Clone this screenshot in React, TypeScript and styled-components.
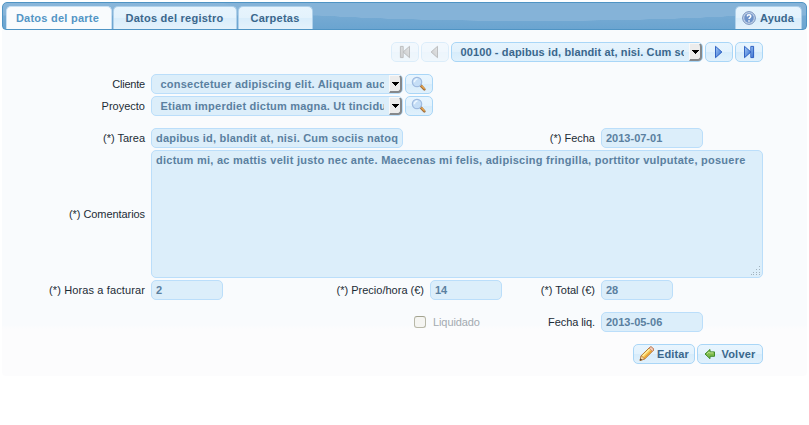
import React from "react";
import styled, { createGlobalStyle } from "styled-components";

const Global = createGlobalStyle`
  * { box-sizing: border-box; }
  body { margin: 0; background: #fff; }
  #root { font: 11px/18px "Liberation Sans", Arial, sans-serif; color: #222; }
`;

const Page = styled.div`
  width: 809px;
  padding: 2px 2px 0;
`;

const Bar = styled.header`
  display: flex;
  height: 28px;
  padding: 3px 4px 0 3px;
  border: 1px solid #4f94c4;
  border-radius: 5px 5px 4px 4px;
  overflow: hidden;
  background:
    radial-gradient(ellipse 310px 20px at 528px -2px, #85b3d8 0, #85b3d8 99%, transparent 100%),
    linear-gradient(#89b6da 0, #85b3d8 12px, #75aad3 13px, #6ba4d0 100%);
`;

const Tab = styled.div<{ $w: number; $gap?: number; $active?: boolean; $ls?: number; $end?: boolean }>`
  display: flex;
  align-items: center;
  justify-content: center;
  gap: 4px;
  flex: none;
  width: ${(p) => p.$w}px;
  height: ${(p) => (p.$active ? 25 : 23)}px;
  padding: ${(p) => (p.$active ? "0 3px 2px 0" : "0 1px 0 0")};
  margin-left: ${(p) => (p.$end ? "auto" : `${p.$gap ?? 0}px`)};
  border: 1px solid ${(p) => (p.$active ? "#c8e0f3" : "#aed0ea")};
  border-bottom: 0;
  border-radius: 5px 5px 0 0;
  background: ${(p) => (p.$active ? "#f9fbfd" : "linear-gradient(#e7f4fd 0, #e3f2fc 50%, #d9edfb 52%, #e4f2fb 100%)")};
  color: ${(p) => (p.$active ? "#5395c5" : "#3a678c")};
  font-weight: bold;
  letter-spacing: ${(p) => p.$ls ?? 0.25}px;
  white-space: nowrap;
`;

const Panel = styled.main`
  display: flex;
  flex-direction: column;
  height: 346px;
  padding: 12px 44px 0 0;
  border-radius: 0 0 4px 4px;
  background: linear-gradient(#f9fbfd 0 295px, #fcfcfd 299px 100%);
`;

const Row = styled.div<{ $mt?: number; $end?: boolean; $h?: number }>`
  display: flex;
  align-items: center;
  justify-content: ${(p) => (p.$end ? "flex-end" : "flex-start")};
  gap: 2px;
  height: ${(p) => p.$h ?? 20}px;
  margin-top: ${(p) => p.$mt ?? 0}px;
`;

const Label = styled.label<{ $w: number; $ls?: number }>`
  flex: none;
  width: ${(p) => p.$w}px;
  padding-right: 4px;
  text-align: right;
  white-space: nowrap;
  letter-spacing: ${(p) => p.$ls ?? 0}px;
  color: #1c2b36;
`;

const Field = styled.div<{ $w: number; $ls?: number }>`
  flex: none;
  width: ${(p) => p.$w}px;
  height: 20px;
  padding: 0 4px;
  border: 1px solid #bbdefa;
  border-radius: 5px;
  background: #dceefa;
  color: #5a80a0;
  font-weight: bold;
  white-space: nowrap;
  letter-spacing: ${(p) => p.$ls ?? 0}px;
`;

const Area = styled(Field)`
  position: relative;
  height: 128px;
`;

const Grip = styled.svg`
  position: absolute;
  right: 1px;
  bottom: 1px;
`;

const SelectBox = styled.div<{ $lit?: boolean }>`
  display: flex;
  flex: none;
  width: 252px;
  height: 20px;
  padding-left: 8px;
  border: 1px solid ${(p) => (p.$lit ? "#a9d6f7" : "#bbdefa")};
  border-radius: 5px;
  background: ${(p) => (p.$lit ? "linear-gradient(#e7f4fd 0, #e1f1fc 50%, #d7ecfb 52%, #e0f1fc 100%)" : "#dceefa")};
  color: ${(p) => (p.$lit ? "#3a678c" : "#5a80a0")};
  font-weight: bold;
`;

const SelectText = styled.span<{ $ls: number }>`
  width: 224px;
  padding-left: 0.5px;
  overflow: hidden;
  white-space: nowrap;
  letter-spacing: ${(p) => p.$ls}px;
`;

const Arrow = styled.span`
  display: flex;
  align-items: center;
  justify-content: center;
  width: 13px;
  height: 18px;
  margin-left: 5px;
  border: solid;
  border-width: 1px 2px 2px 1px;
  border-color: #f8f8f8 #85888b #85888b #f8f8f8;
  border-radius: 0 4px 4px 0;
  background: #ececec;
`;

const Button = styled.button<{ $w?: number; $off?: boolean; $ls?: number; $gap?: number }>`
  display: flex;
  align-items: center;
  justify-content: center;
  gap: ${(p) => p.$gap ?? 0}px;
  flex: none;
  width: ${(p) => p.$w ?? 28}px;
  height: 20px;
  padding: 0;
  border: 1px solid #a9d6f7;
  border-radius: 5px;
  background: linear-gradient(#e8f5fe 0, #e3f2fd 50%, #d7ecfb 52%, #e1f1fc 100%);
  opacity: ${(p) => (p.$off ? 0.35 : 1)};
  color: #3a678c;
  font: bold 11px/18px "Liberation Sans", Arial, sans-serif;
  letter-spacing: ${(p) => p.$ls ?? 0.2}px;
`;

const Check = styled.span`
  flex: none;
  width: 12px;
  height: 12px;
  margin-left: 412px;
  border: 1px solid #b8b8a8;
  border-top-color: #a3a38f;
  border-radius: 3px;
  background: #f5f5f2;
`;

const Muted = styled.span`
  width: 60px;
  padding-left: 5px;
  color: #a4aab0;
  letter-spacing: -0.1px;
`;

function Caret() {
  return (
    <svg width="8" height="4" viewBox="0 0 8 4" shapeRendering="crispEdges">
      <path d="M0 0h8L4 4z" fill="#000" />
    </svg>
  );
}

function Nav({ kind, off }: { kind: "first" | "prev" | "next" | "last"; off?: boolean }) {
  const flip = kind === "first" || kind === "prev";
  const bar = kind === "first" || kind === "last";
  const c = off ? ["#bbb", "#777", "#444"] : ["#a8cdf8", "#2b66cc", "#2558bd"];
  const x = bar ? 3.5 : flip ? 5.5 : 4.5;
  return (
    <svg width="16" height="16" viewBox="0 0 16 16">
      <defs>
        <linearGradient id={`nav-${kind}`} x2="1" y2="1">
          <stop stopColor={c[0]} />
          <stop offset="1" stopColor={c[1]} />
        </linearGradient>
      </defs>
      <g transform={flip ? "translate(16 0) scale(-1 1)" : undefined} fill={`url(#nav-${kind})`} stroke={c[2]} strokeWidth=".9">
        <path d={`M${x} 2.3V13.7L${x + 6.4} 8z`} />
        {bar && <path d="M9.8 2.4h2.8v11.2H9.8z" />}
      </g>
    </svg>
  );
}

function Magnifier() {
  return (
    <svg width="16" height="16" viewBox="0 0 16 16">
      <path d="M9.8 9.5l3.6 3.8" stroke="#a2713f" strokeWidth="2.6" strokeLinecap="round" />
      <path d="M10.8 10l2.5 2.7" stroke="#eea94d" strokeWidth="1.2" strokeLinecap="round" />
      <circle cx="6" cy="6" r="4.7" fill="#c5def6" stroke="#9fbbe0" strokeWidth="1.2" />
      <path d="M3.4 6.2A3 3 0 0 1 6.5 3" fill="none" stroke="#edf7ff" strokeWidth="1.5" />
    </svg>
  );
}

function Help() {
  return (
    <svg width="14" height="14" viewBox="0 0 14 14">
      <circle cx="7" cy="7" r="6.3" fill="#dfe8f5" stroke="#6684b4" />
      <circle cx="7" cy="7" r="4.8" fill="#6d92c9" stroke="#8aa7d2" strokeWidth=".6" />
      <path d="M5.2 5.4C5.3 3.2 8.9 3.3 8.8 5.3 8.8 6.6 7 6.6 7 8.1M7 9.3v1.5" fill="none" stroke="#fff" strokeWidth="1.4" />
    </svg>
  );
}

function Pencil() {
  return (
    <svg width="16" height="16" viewBox="0 0 16 16">
      <path d="M1 14.5l1.2-4.8L11 1.1c1.1-.9 4.2 1.6 3.5 3.1L5.7 13z" fill="#f7c653" stroke="#aa6823" strokeWidth=".9" />
      <path d="M3.5 10l7.8-7.5" stroke="#fff0a1" strokeWidth="1.4" />
      <path d="M5.2 12l7.7-7.5" stroke="#e59328" strokeWidth="1" />
      <path d="M10 2.1l1.3-1c1.2-.7 3.8 1.6 3.2 3l-1.2 1.3z" fill="#f3cdb8" stroke="#b7735b" strokeWidth=".7" />
      <path d="M2.2 9.8l3.4 3.1L1 14.5z" fill="#f5d7a5" stroke="#a76b34" strokeWidth=".6" />
      <path d="M1 14.5l.5-2 1.5 1.3z" fill="#332b25" />
    </svg>
  );
}

function Back() {
  return (
    <svg width="12" height="12" viewBox="0 0 12 12">
      <path d="M1 6l5-4.5v2.4h4.5v4.4H6v2.4z" fill="#7dbb4d" stroke="#3f8b29" strokeLinejoin="round" />
      <path d="M3 5.8l2.2-2v1.1h4.2" fill="none" stroke="#bce28e" />
    </svg>
  );
}

function Select({ text, ls = 0.22, lit }: { text: string; ls?: number; lit?: boolean }) {
  return (
    <SelectBox $lit={lit}>
      <SelectText $ls={ls}>{text}</SelectText>
      <Arrow><Caret /></Arrow>
    </SelectBox>
  );
}

export default function App() {
  return (
    <Page>
      <Global />
      <Bar>
        <Tab $w={106} $active>Datos del parte</Tab>
        <Tab $w={124} $gap={1}>Datos del registro</Tab>
        <Tab $w={75} $gap={1}>Carpetas</Tab>
        <Tab $w={67} $end $ls={0.15}><Help />Ayuda</Tab>
      </Bar>
      <Panel>
        <Row $end>
          <Button $off><Nav kind="first" off /></Button>
          <Button $off><Nav kind="prev" off /></Button>
          <Select lit ls={0.12} text="00100 - dapibus id, blandit at, nisi. Cum sociis" />
          <Button><Nav kind="next" /></Button>
          <Button><Nav kind="last" /></Button>
        </Row>
        <Row $mt={12}>
          <Label $w={147} $ls={-0.2}>Cliente</Label>
          <Select text="consectetuer adipiscing elit. Aliquam auctor" />
          <Button><Magnifier /></Button>
        </Row>
        <Row $mt={2}>
          <Label $w={147}>Proyecto</Label>
          <Select text="Etiam imperdiet dictum magna. Ut tincidunt" />
          <Button><Magnifier /></Button>
        </Row>
        <Row $mt={12}>
          <Label $w={147}>(*) Tarea</Label>
          <Field $w={252} $ls={0.2}>dapibus id, blandit at, nisi. Cum sociis natoq</Field>
          <Label $w={194}>(*) Fecha</Label>
          <Field $w={102}>2013-07-01</Field>
        </Row>
        <Row $mt={2} $h={128}>
          <Label $w={147} $ls={-0.07}>(*) Comentarios</Label>
          <Area $w={612} $ls={0.26}>
            dictum mi, ac mattis velit justo nec ante. Maecenas mi felis, adipiscing fringilla, porttitor vulputate, posuere
            <Grip width="10" height="10" viewBox="0 0 10 10" fill="#a2b3bf" shapeRendering="crispEdges">
              <path d="M8 0h1v1H8zM5 3h1v1H5zM8 3h1v1H8zM2 6h1v1H2zM5 6h1v1H5zM8 6h1v1H8zM0 8h1v1H0zM2 8h1v1H2zM5 8h1v1H5zM8 8h1v1H8z" />
            </Grip>
          </Area>
        </Row>
        <Row $mt={2}>
          <Label $w={147} $ls={0.12}>(*) Horas a facturar</Label>
          <Field $w={72}>2</Field>
          <Label $w={203}>(*) Precio/hora (€)</Label>
          <Field $w={72}>14</Field>
          <Label $w={95}>(*) Total (€)</Label>
          <Field $w={72}>28</Field>
        </Row>
        <Row $mt={12}>
          <Check />
          <Muted>Liquidado</Muted>
          <Label $w={109} $ls={-0.08}>Fecha liq.</Label>
          <Field $w={102}>2013-05-06</Field>
        </Row>
        <Row $mt={12} $end>
          <Button $w={62} $gap={2} $ls={0.1}><Pencil />Editar</Button>
          <Button $w={66} $gap={5}><Back />Volver</Button>
        </Row>
      </Panel>
    </Page>
  );
}
